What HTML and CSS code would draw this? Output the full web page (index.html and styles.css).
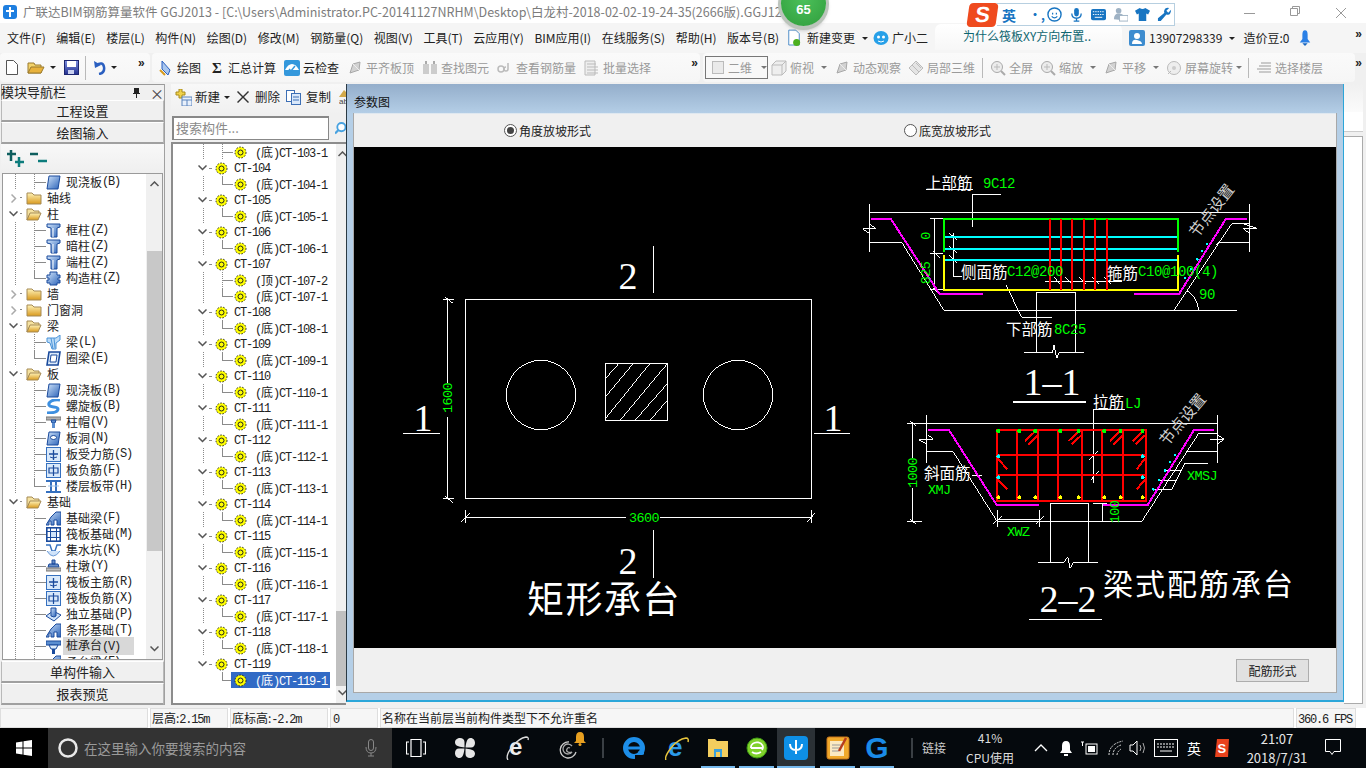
FILE: index.html
```html
<!DOCTYPE html>
<html lang="zh">
<head>
<meta charset="utf-8">
<title>广联达BIM钢筋算量软件 GGJ2013</title>
<link rel="stylesheet" href="styles.css">
</head>
<body>
<svg class="defs" aria-hidden="true">
  <defs>
    <linearGradient id="gFolder" x1="0" y1="0" x2="0" y2="1"><stop offset="0" stop-color="#fff3b8"/><stop offset="1" stop-color="#d99a1e"/></linearGradient>
    <linearGradient id="gBlue" x1="0" y1="0" x2="1" y2="1"><stop offset="0" stop-color="#cfe3fa"/><stop offset="1" stop-color="#2a62b8"/></linearGradient>
    <linearGradient id="gSave" x1="0" y1="0" x2="0" y2="1"><stop offset="0" stop-color="#7d8fe0"/><stop offset="1" stop-color="#23308f"/></linearGradient>
    <symbol id="fc" viewBox="0 0 16 14"><path d="M1 2h5l2 2h7v9H1z" fill="url(#gFolder)" stroke="#a58a55"/></symbol>
    <symbol id="fo" viewBox="0 0 16 14"><path d="M1 2h5l2 2h5v3H4L1 13z" fill="#f5e2a0" stroke="#a58a55"/><path d="M4 6h11l-3 7H1z" fill="url(#gFolder)" stroke="#a58a55"/></symbol>
    <symbol id="col" viewBox="0 0 15 15"><path d="M1 1h13v3l-3 1v9H5V5L1 4z" fill="url(#gBlue)" stroke="#1a4a9c"/><path d="M7 5v9" stroke="#fff"/></symbol>
    <symbol id="gz" viewBox="0 0 15 15"><path d="M4 1h7v3h3v3h-2v2h2v3h-3v2H4v-2H1V9h2V7H1V4h3z" fill="url(#gBlue)" stroke="#1a4a9c"/></symbol>
    <symbol id="slab" viewBox="0 0 15 15"><path d="M3 1h11l-2 13H1z" fill="url(#gBlue)" stroke="#1a4a9c"/></symbol>
    <symbol id="ring" viewBox="0 0 15 15"><path d="M3 1h11l-2 13H1z" fill="#dcebfb" stroke="#1a4a9c" stroke-width="1.6"/><path d="M5 4h6l-1 7H4z" fill="#fff" stroke="#1a4a9c"/></symbol>
    <symbol id="beam" viewBox="0 0 15 15"><path d="M1 3l9 0 4-3v5l-4 3v6H6L4 8 1 7z" fill="#bcdcf7" stroke="#4d94d8"/><path d="M5 3l2 11M8 3l1 10" stroke="#4d94d8"/></symbol>
    <symbol id="spiral" viewBox="0 0 15 15"><path d="M14 1C7 0 2 3 3 6s9 1 9 4-5 4-11 4" fill="none" stroke="#3d8fe0" stroke-width="3"/></symbol>
    <symbol id="cap" viewBox="0 0 15 15"><path d="M0 2h15v3H0z" fill="#b0b0b0" stroke="#777"/><path d="M5 5h5l-1 3H6z" fill="#5b8ed0" stroke="#1a4a9c"/><path d="M6 8h3v5H6z" fill="#5b8ed0"/></symbol>
    <symbol id="hole" viewBox="0 0 15 15"><path d="M3 1h11l-2 13H1z" fill="url(#gBlue)" stroke="#1a4a9c"/><ellipse cx="7.5" cy="6.5" rx="3" ry="2" fill="#fff" stroke="#1a4a9c"/></symbol>
    <symbol id="pl1" viewBox="0 0 15 15"><rect x=".5" y=".5" width="14" height="14" fill="#d9e9fa" stroke="#3570bf"/><path d="M7.5 3v10M3 7h9" stroke="#1a4a9c" stroke-width="1.3"/><path d="M4 10q3 2 7 0" fill="none" stroke="#1a4a9c"/></symbol>
    <symbol id="pl2" viewBox="0 0 15 15"><rect x=".5" y=".5" width="14" height="14" fill="#d9e9fa" stroke="#3570bf"/><path d="M3 5h9v5H3zM7.5 2v11" fill="none" stroke="#1a4a9c" stroke-width="1.2"/></symbol>
    <symbol id="band" viewBox="0 0 15 15"><path d="M0 2h15M0 13h15" stroke="#3570bf" stroke-width="2"/><path d="M5 3v9M10 3v9" stroke="#3570bf" stroke-width="2"/><path d="M2 7h11" stroke="#9cc2ea"/></symbol>
    <symbol id="fb" viewBox="0 0 15 15"><path d="M0 14l5-8 5-5h5v13H11V9H8v5H5v-4H3v4z" fill="url(#gBlue)" stroke="#1a4a9c"/></symbol>
    <symbol id="raft" viewBox="0 0 15 15"><rect x=".8" y=".8" width="13.4" height="13.4" fill="#fff" stroke="#1a4a9c" stroke-width="1.6"/><rect x="4.5" y="4.5" width="6" height="6" fill="#cfe3fa" stroke="#1a4a9c"/><path d="M1 4.5h3M11 4.500h3M1 10.500h3M11 10.500h3M4.500 1v3M10.500 1v3M4.500 11v3M10.500 11v3" stroke="#1a4a9c"/></symbol>
    <symbol id="pit" viewBox="0 0 15 15"><path d="M0 2h4l2 6h3l2-6h4" fill="none" stroke="#3570bf" stroke-width="1.4"/><path d="M1 8q6 10 13 0" fill="#cfe3fa" stroke="#6b9ad6"/></symbol>
    <symbol id="pier" viewBox="0 0 15 15"><path d="M6 1h3v4H6zM3 5h9l1 3H2z" fill="#6a8fc6" stroke="#1a4a9c"/><rect x="0" y="9" width="15" height="3" fill="#bdbdbd" stroke="#777"/></symbol>
    <symbol id="iso" viewBox="0 0 15 15"><path d="M0 9l7-5 8 4-7 6z" fill="#cfe3fa" stroke="#1a4a9c"/><path d="M5 1h5v8l-2 1-3-1z" fill="url(#gBlue)" stroke="#1a4a9c"/></symbol>
    <symbol id="pile" viewBox="0 0 15 15"><path d="M0 2h15v4H0z" fill="#5b8ed0" stroke="#1a4a9c"/><path d="M3 6h9l-2 4H5z" fill="#dcebfb" stroke="#1a4a9c"/><path d="M6 10h3v5H6z" fill="#1a4a9c"/></symbol>
    <symbol id="cmp" viewBox="0 0 13 13"><circle cx="6.500" cy="6.500" r="5.500" fill="#ff0"/><circle cx="6.500" cy="6.500" r="5.500" fill="none" stroke="#222" stroke-dasharray="1.500 1.500"/><circle cx="6.500" cy="6.500" r="2.500" fill="#ff0" stroke="#222"/></symbol>
    <symbol id="chd" viewBox="0 0 9 6"><path d="M.5 .5l4 4 4-4" fill="none" stroke="#555" stroke-width="1.500"/></symbol>
    <symbol id="chr" viewBox="0 0 6 9"><path d="M.5 .5l4 4-4 4" fill="none" stroke="#aaa" stroke-width="1.500"/></symbol>
    <symbol id="gen" viewBox="0 0 16 16"><path d="M3 13l3-9 7-2-1 8z" fill="#d2d2d2" stroke="#a8a8a8"/><path d="M6 4l6 6" stroke="#ededed"/></symbol>
    <symbol id="mag" viewBox="0 0 16 16"><circle cx="7" cy="7" r="5.500" fill="#ececec" stroke="#aaa"/><path d="M11 11l4 4" stroke="#aaa" stroke-width="2"/><path d="M7 4v6M4 7h6" stroke="#bbb"/></symbol>
    <symbol id="edge" viewBox="0 0 24 24"><circle cx="12" cy="12" r="8.500" fill="none" stroke="#1d8ee8" stroke-width="5"/><path d="M5 12h15M22 17l-6 0" stroke="#1d8ee8" stroke-width="3"/><path d="M13 19h10v5H13z" fill="#05090d"/></symbol>
  </defs>
</svg>

<header class="titlebar">
  <svg class="app-ic" viewBox="0 0 14 14"><rect width="14" height="14" rx="3" fill="#1f7fe0"/><path d="M7 2v10M3 6h8" stroke="#fff" stroke-width="2"/></svg>
  <span class="title-text">广联达BIM钢筋算量软件 GGJ2013 - [C:\Users\Administrator.PC-20141127NRHM\Desktop\白龙村-2018-02-02-19-24-35(2666版).GGJ12</span>
  <div class="winctl">
    <svg viewBox="0 0 46 23"><path d="M18 13.500h11" stroke="#999"/></svg>
    <svg viewBox="0 0 46 23"><path d="M20.500 8.500v-2h7v7h-2M18.500 8.500h7v7h-7z" fill="#fff" stroke="#999"/></svg>
    <svg viewBox="0 0 46 23"><path d="M18 8l10 10M28 8L18 18" stroke="#999"/></svg>
  </div>
</header>
<div class="badge"><span>65</span></div>
<div class="ime">
  <span class="ime-s">S</span>
  <div class="ime-bar">
    <b class="ime-en">英</b><span class="ime-dot">•,</span>
    <svg viewBox="0 0 16 16"><circle cx="8" cy="8" r="7" fill="#fff" stroke="#1875c2" stroke-width="1.500"/><path d="M6 6v2M10 6v2M5 10q3 3 6 0" fill="none" stroke="#1875c2" stroke-width="1.300"/></svg>
    <svg viewBox="0 0 16 16"><rect x="5.500" y="1" width="5" height="9" rx="2.500" fill="#1875c2"/><path d="M3 7q0 5 5 5t5-5M8 12v3M5 15h6" fill="none" stroke="#1875c2" stroke-width="1.400"/></svg>
    <svg viewBox="0 0 16 16"><rect x="0" y="2" width="16" height="12" rx="2" fill="#1875c2"/><path d="M2 5h12M2 8h12" stroke="#fff" stroke-dasharray="1.500 1"/><path d="M4 11h8" stroke="#fff"/></svg>
    <svg viewBox="0 0 16 16"><circle cx="6" cy="4" r="3" fill="#9fb2c4"/><path d="M1 13q0-6 5-6t5 3v4z" fill="#9fb2c4"/><rect x="7" y="9" width="9" height="6" fill="#fff" stroke="#9fb2c4"/></svg>
    <svg viewBox="0 0 16 16"><path d="M5 1L0 4l2 4 2-1v8h8V7l2 1 2-4-5-3q-3 2-6 0z" fill="#1875c2"/></svg>
    <svg viewBox="0 0 16 16"><path d="M15 3l-3 3-2-2 3-3q-4-1-5 2t0 3L1 12v3h3l6-7q3 1 4-1t1-4z" fill="#1875c2"/></svg>
  </div>
</div>

<nav class="menubar">
  <span>文件(F)</span><span class="m1">编辑(E)</span><span class="m1">楼层(L)</span><span class="m1">构件(N)</span><span class="m1">绘图(D)</span><span class="m1">修改(M)</span><span class="m1">钢筋量(Q)</span><span class="m1">视图(V)</span><span class="m1">工具(T)</span><span class="m1">云应用(Y)</span><span class="m1">BIM应用(I)</span><span class="m1">在线服务(S)</span><span class="m1">帮助(H)</span><span class="m1">版本号(B)</span>
  <svg class="mi mi-doc" viewBox="0 0 16 20"><path d="M2 1h8l4 4v13H2z" fill="#fff" stroke="#3b82c4"/><circle cx="11" cy="15" r="4" fill="#4caf1e"/></svg>
  <span class="m-new">新建变更</span><i class="caret caret-dk"></i>
  <svg class="mi mi-gx" viewBox="0 0 16 16"><ellipse cx="8" cy="8" rx="7.500" ry="7" fill="#27a0e8"/><circle cx="5.500" cy="7" r="1.500" fill="#fff"/><circle cx="10.500" cy="7" r="1.500" fill="#fff"/><path d="M5 11q3 2 6 0" fill="none" stroke="#fff"/></svg>
  <span class="m-gx">广小二</span>
  <div class="hint">为什么筏板XY方向布置..</div>
  <svg class="mi mi-user" viewBox="0 0 16 16"><rect width="16" height="16" rx="2" fill="#3d8ccf"/><circle cx="8" cy="6" r="3" fill="#fff"/><path d="M3 14q0-5 5-4t5 4z" fill="#fff"/></svg>
  <span class="m-phone">13907298339</span><i class="caret caret-dk"></i>
  <span class="m-bean">造价豆:0</span>
  <svg class="mi mi-bell" viewBox="0 0 16 20"><path d="M8 1q-3 0-3 5v5l-3 4h12l-3-4V6q0-5-3-5z" fill="#2b80e6"/><path d="M5 16h6l-3 3z" fill="#1565c0"/></svg>
  <span class="more more-end">»</span>
</nav>

<div class="toolbar">
  <div class="seg seg1">
    <svg class="ic-file" viewBox="0 0 12 15"><path d="M.5 .5h7l4 4v10H.5z" fill="#fff" stroke="#555"/></svg>
    <svg class="ic-open" viewBox="0 0 18 15"><path d="M1 3h6l1 2h6v8H1z" fill="#f3d36b" stroke="#9a7a2e"/><path d="M4 7h13l-3 6H1z" fill="#e8b23c" stroke="#9a7a2e"/></svg>
    <i class="caret caret-dk"></i>
    <svg class="ic-save" viewBox="0 0 15 15"><rect x=".5" y=".5" width="14" height="14" fill="url(#gSave)" stroke="#1c2570"/><rect x="3" y="1" width="9" height="6" fill="#fff"/><rect x="4" y="10" width="6" height="4" fill="#c9d0ef"/></svg>
    <i class="vsep"></i>
    <svg class="ic-undo" viewBox="0 0 12 15"><path d="M2 5q7-4 8 2t-5 7" fill="none" stroke="#2a5fc0" stroke-width="2.500"/><path d="M0 1l1 7 6-3z" fill="#2a5fc0"/></svg>
    <i class="caret caret-dk"></i>
    <span class="more">»</span>
  </div>
  <div class="seg seg2">
    <div class="tool"><svg class="ti" viewBox="0 0 16 16"><path d="M4 1l8 9-2 5-6-6z" fill="#a9c6ee" stroke="#2a5fc0"/><path d="M2 10l5 5" stroke="#d69a1e" stroke-width="2"/></svg>绘图</div>
    <div class="tool"><span class="ti sigma">Σ</span>汇总计算</div>
    <div class="tool"><svg class="ti" viewBox="0 0 16 16"><rect width="16" height="16" rx="2" fill="#3498dc"/><path d="M1 10q3-6 7-6t7 6z" fill="#fff"/><path d="M5 9l2 2 4-5" fill="none" stroke="#3498dc" stroke-width="1.500"/></svg>云检查</div>
    <div class="tool off"><svg class="ti"><use href="#gen"/></svg>平齐板顶</div>
    <div class="tool off"><svg class="ti" viewBox="0 0 16 16"><rect x="1" y="4" width="6" height="10" fill="#ccc"/><rect x="9" y="4" width="6" height="10" fill="#ccc"/><path d="M3 1h2v3H3zM11 1h2v3h-2z" fill="#aaa"/></svg>查找图元</div>
    <div class="tool off"><svg class="ti" viewBox="0 0 16 16"><circle cx="4" cy="9" r="3" fill="none" stroke="#bbb" stroke-width="1.500"/><path d="M11 3v6a2 2 0 1 1-2-2" fill="none" stroke="#bbb" stroke-width="1.500"/></svg>查看钢筋量</div>
    <div class="tool off"><svg class="ti" viewBox="0 0 16 16"><path d="M1 1h10v14H1z" fill="#eee" stroke="#bbb"/><path d="M3 4h9M3 7h11M3 10h11M3 13h11" stroke="#bbb"/></svg>批量选择</div>
    <span class="more more-r">»</span>
  </div>
  <div class="seg seg3">
    <div class="combo"><i class="sq"></i><span>二维</span><i class="caret"></i></div>
    <div class="tools3">
      <div class="tool off"><svg class="ti" viewBox="0 0 16 16"><path d="M1 5l4-4h10v10l-4 4H1z" fill="#eee" stroke="#bbb"/><path d="M1 5h10v10M11 5l4-4" fill="none" stroke="#bbb"/></svg>俯视<i class="caret"></i></div>
      <div class="tool off"><svg class="ti"><use href="#gen"/></svg>动态观察</div>
      <div class="tool off"><svg class="ti" viewBox="0 0 16 16"><path d="M1 8l7-7 7 7-7 7z" fill="#e4e4e4" stroke="#bbb"/><path d="M4 5l7 7M8 3l5 5" stroke="#bbb"/></svg>局部三维</div>
      <i class="vsep"></i>
      <div class="tool off"><svg class="ti"><use href="#mag"/></svg>全屏</div>
      <div class="tool off"><svg class="ti"><use href="#mag"/></svg>缩放<i class="caret"></i></div>
      <div class="tool off"><svg class="ti"><use href="#gen"/></svg>平移<i class="caret"></i></div>
      <div class="tool off rot"><svg class="ti" viewBox="0 0 16 16"><circle cx="8" cy="8" r="6.500" fill="#eee" stroke="#bbb"/><circle cx="8" cy="8" r="2" fill="#ccc"/><path d="M2 14l3-3" stroke="#bbb"/></svg>屏幕旋转<i class="caret"></i></div>
      <i class="vsep vs2"></i>
      <div class="tool off"><svg class="ti" viewBox="0 0 16 16"><path d="M5 3h10M3 6h12M1 9h14M3 12h12" stroke="#bbb" stroke-width="1.500"/></svg>选择楼层</div>
    </div>
  </div>
  <span class="more more-end">»</span>
</div>

<main class="workspace">
  <aside class="nav">
    <div class="nav-head"><span class="nav-title">模块导航栏</span>
      <svg class="pin" viewBox="0 0 9 10"><path d="M2 0h5v5h1v1H5v4H4V6H1V5h1z" fill="#222"/></svg><span class="x">×</span></div>
    <div class="nav-btn">工程设置</div>
    <div class="nav-btn">绘图输入</div>
    <div class="nav-tools">
      <svg viewBox="0 0 17 17"><path d="M4 0v11M0 4h9" stroke="#0f5f5f" stroke-width="2.500"/><path d="M12 7v10M8 12h9" stroke="#0c7c7c" stroke-width="2.500"/></svg>
      <svg viewBox="0 0 17 17"><path d="M0 4h8" stroke="#0f5f5f" stroke-width="2.500"/><path d="M8 11h9" stroke="#0c7c7c" stroke-width="2.500"/></svg>
    </div>
    <div class="nav-treebox">
      <div class="nav-tree">
        <div class="nl lv"><svg class="ic15"><use href="#slab"/></svg>现浇板<tt>(B)</tt></div>
        <div class="ng"><svg class="chv"><use href="#chr"/></svg><svg class="fd"><use href="#fc"/></svg>轴线</div>
        <div class="ng"><svg class="chv2"><use href="#chd"/></svg><svg class="fd"><use href="#fo"/></svg>柱</div>
        <div class="nl"><svg class="ic15"><use href="#col"/></svg>框柱<tt>(Z)</tt></div>
        <div class="nl"><svg class="ic15"><use href="#col"/></svg>暗柱<tt>(Z)</tt></div>
        <div class="nl"><svg class="ic15"><use href="#col"/></svg>端柱<tt>(Z)</tt></div>
        <div class="nl lst"><svg class="ic15"><use href="#gz"/></svg>构造柱<tt>(Z)</tt></div>
        <div class="ng"><svg class="chv"><use href="#chr"/></svg><svg class="fd"><use href="#fc"/></svg>墙</div>
        <div class="ng"><svg class="chv"><use href="#chr"/></svg><svg class="fd"><use href="#fc"/></svg>门窗洞</div>
        <div class="ng"><svg class="chv2"><use href="#chd"/></svg><svg class="fd"><use href="#fo"/></svg>梁</div>
        <div class="nl"><svg class="ic15"><use href="#beam"/></svg>梁<tt>(L)</tt></div>
        <div class="nl lst"><svg class="ic15"><use href="#ring"/></svg>圈梁<tt>(E)</tt></div>
        <div class="ng"><svg class="chv2"><use href="#chd"/></svg><svg class="fd"><use href="#fo"/></svg>板</div>
        <div class="nl"><svg class="ic15"><use href="#slab"/></svg>现浇板<tt>(B)</tt></div>
        <div class="nl"><svg class="ic15"><use href="#spiral"/></svg>螺旋板<tt>(B)</tt></div>
        <div class="nl"><svg class="ic15"><use href="#cap"/></svg>柱帽<tt>(V)</tt></div>
        <div class="nl"><svg class="ic15"><use href="#hole"/></svg>板洞<tt>(N)</tt></div>
        <div class="nl"><svg class="ic15"><use href="#pl1"/></svg>板受力筋<tt>(S)</tt></div>
        <div class="nl"><svg class="ic15"><use href="#pl2"/></svg>板负筋<tt>(F)</tt></div>
        <div class="nl lst"><svg class="ic15"><use href="#band"/></svg>楼层板带<tt>(H)</tt></div>
        <div class="ng"><svg class="chv2"><use href="#chd"/></svg><svg class="fd"><use href="#fo"/></svg>基础</div>
        <div class="nl"><svg class="ic15"><use href="#fb"/></svg>基础梁<tt>(F)</tt></div>
        <div class="nl"><svg class="ic15"><use href="#raft"/></svg>筏板基础<tt>(M)</tt></div>
        <div class="nl"><svg class="ic15"><use href="#pit"/></svg>集水坑<tt>(K)</tt></div>
        <div class="nl"><svg class="ic15"><use href="#pier"/></svg>柱墩<tt>(Y)</tt></div>
        <div class="nl"><svg class="ic15"><use href="#pl1"/></svg>筏板主筋<tt>(R)</tt></div>
        <div class="nl"><svg class="ic15"><use href="#pl2"/></svg>筏板负筋<tt>(X)</tt></div>
        <div class="nl"><svg class="ic15"><use href="#iso"/></svg>独立基础<tt>(P)</tt></div>
        <div class="nl"><svg class="ic15"><use href="#fb"/></svg>条形基础<tt>(T)</tt></div>
        <div class="nl cur"><svg class="ic15"><use href="#pile"/></svg><span>桩承台<tt>(V)</tt></span></div>
        <div class="nl"><svg class="ic15"><use href="#fb"/></svg>承台梁<tt>(F)</tt></div>
      </div>
      <div class="vscroll navscroll"><svg class="arr" viewBox="0 0 9 6"><path d="M.5 5l4-4 4 4" fill="none" stroke="#555" stroke-width="1.500"/></svg><div class="thumb"></div><svg class="arr arr-b" viewBox="0 0 9 6"><use href="#chd"/></svg></div>
    </div>
    <div class="nav-btn nb1">单构件输入</div>
    <div class="nav-btn">报表预览</div>
  </aside>

  <section class="comp">
    <div class="comp-tools">
      <svg class="ct-ic" viewBox="0 0 17 17"><path d="M4 0h3v3h3v3H7v3H4V6H1V3h3z" fill="#f0d24a" stroke="#a98b1c"/><rect x="7" y="8" width="10" height="9" fill="#e8f0fb" stroke="#5b83bc"/><path d="M7 11h10M12 11v6" stroke="#5b83bc"/></svg>
      <span class="ct-new">新建</span><i class="caret caret-dk"></i>
      <svg class="ct-x" viewBox="0 0 12 12"><path d="M1 0l5 5 5-5 1 1-5 5 5 5-1 1-5-5-5 5-1-1 5-5-5-5z" fill="#333"/></svg>
      <span class="ct-del">删除</span>
      <svg class="ct-cp" viewBox="0 0 15 15"><rect x=".5" y=".5" width="8" height="11" fill="#fff" stroke="#3d6fb5"/><rect x="5.500" y="3.500" width="9" height="11" fill="#d9e8fa" stroke="#3d6fb5"/><path d="M7 7h6M7 10h6" stroke="#3d6fb5"/></svg>
      <span class="ct-copy">复制</span>
      <svg class="ct-ab" viewBox="0 0 12 15"><path d="M5 0l7 7H0z" fill="#d2a94a"/><text x="0" y="14" class="ab">ab</text></svg>
    </div>
    <div class="search"><div class="search-box">搜索构件...</div>
      <svg class="search-ic" viewBox="0 0 12 14"><circle cx="7" cy="6" r="4.500" fill="#fff" stroke="#48a2e0" stroke-width="2"/><path d="M3.500 9.500L0 13" stroke="#48a2e0" stroke-width="2.500"/></svg></div>
    <div class="comp-treebox">
      <div class="comp-tree">
        <div class="cl"><svg class="ic13"><use href="#cmp"/></svg><span><tt>(</tt>底<tt>)CT-103-1</tt></span></div>
        <div class="cg"><svg class="chv2"><use href="#chd"/></svg><svg class="ic13"><use href="#cmp"/></svg><tt>CT-104</tt></div>
        <div class="cl lst"><svg class="ic13"><use href="#cmp"/></svg><span><tt>(</tt>底<tt>)CT-104-1</tt></span></div>
        <div class="cg"><svg class="chv2"><use href="#chd"/></svg><svg class="ic13"><use href="#cmp"/></svg><tt>CT-105</tt></div>
        <div class="cl lst"><svg class="ic13"><use href="#cmp"/></svg><span><tt>(</tt>底<tt>)CT-105-1</tt></span></div>
        <div class="cg"><svg class="chv2"><use href="#chd"/></svg><svg class="ic13"><use href="#cmp"/></svg><tt>CT-106</tt></div>
        <div class="cl lst"><svg class="ic13"><use href="#cmp"/></svg><span><tt>(</tt>底<tt>)CT-106-1</tt></span></div>
        <div class="cg"><svg class="chv2"><use href="#chd"/></svg><svg class="ic13"><use href="#cmp"/></svg><tt>CT-107</tt></div>
        <div class="cl"><svg class="ic13"><use href="#cmp"/></svg><span><tt>(</tt>顶<tt>)CT-107-2</tt></span></div>
        <div class="cl lst"><svg class="ic13"><use href="#cmp"/></svg><span><tt>(</tt>底<tt>)CT-107-1</tt></span></div>
        <div class="cg"><svg class="chv2"><use href="#chd"/></svg><svg class="ic13"><use href="#cmp"/></svg><tt>CT-108</tt></div>
        <div class="cl lst"><svg class="ic13"><use href="#cmp"/></svg><span><tt>(</tt>底<tt>)CT-108-1</tt></span></div>
        <div class="cg"><svg class="chv2"><use href="#chd"/></svg><svg class="ic13"><use href="#cmp"/></svg><tt>CT-109</tt></div>
        <div class="cl lst"><svg class="ic13"><use href="#cmp"/></svg><span><tt>(</tt>底<tt>)CT-109-1</tt></span></div>
        <div class="cg"><svg class="chv2"><use href="#chd"/></svg><svg class="ic13"><use href="#cmp"/></svg><tt>CT-110</tt></div>
        <div class="cl lst"><svg class="ic13"><use href="#cmp"/></svg><span><tt>(</tt>底<tt>)CT-110-1</tt></span></div>
        <div class="cg"><svg class="chv2"><use href="#chd"/></svg><svg class="ic13"><use href="#cmp"/></svg><tt>CT-111</tt></div>
        <div class="cl lst"><svg class="ic13"><use href="#cmp"/></svg><span><tt>(</tt>底<tt>)CT-111-1</tt></span></div>
        <div class="cg"><svg class="chv2"><use href="#chd"/></svg><svg class="ic13"><use href="#cmp"/></svg><tt>CT-112</tt></div>
        <div class="cl lst"><svg class="ic13"><use href="#cmp"/></svg><span><tt>(</tt>底<tt>)CT-112-1</tt></span></div>
        <div class="cg"><svg class="chv2"><use href="#chd"/></svg><svg class="ic13"><use href="#cmp"/></svg><tt>CT-113</tt></div>
        <div class="cl lst"><svg class="ic13"><use href="#cmp"/></svg><span><tt>(</tt>底<tt>)CT-113-1</tt></span></div>
        <div class="cg"><svg class="chv2"><use href="#chd"/></svg><svg class="ic13"><use href="#cmp"/></svg><tt>CT-114</tt></div>
        <div class="cl lst"><svg class="ic13"><use href="#cmp"/></svg><span><tt>(</tt>底<tt>)CT-114-1</tt></span></div>
        <div class="cg"><svg class="chv2"><use href="#chd"/></svg><svg class="ic13"><use href="#cmp"/></svg><tt>CT-115</tt></div>
        <div class="cl lst"><svg class="ic13"><use href="#cmp"/></svg><span><tt>(</tt>底<tt>)CT-115-1</tt></span></div>
        <div class="cg"><svg class="chv2"><use href="#chd"/></svg><svg class="ic13"><use href="#cmp"/></svg><tt>CT-116</tt></div>
        <div class="cl lst"><svg class="ic13"><use href="#cmp"/></svg><span><tt>(</tt>底<tt>)CT-116-1</tt></span></div>
        <div class="cg"><svg class="chv2"><use href="#chd"/></svg><svg class="ic13"><use href="#cmp"/></svg><tt>CT-117</tt></div>
        <div class="cl lst"><svg class="ic13"><use href="#cmp"/></svg><span><tt>(</tt>底<tt>)CT-117-1</tt></span></div>
        <div class="cg"><svg class="chv2"><use href="#chd"/></svg><svg class="ic13"><use href="#cmp"/></svg><tt>CT-118</tt></div>
        <div class="cl lst"><svg class="ic13"><use href="#cmp"/></svg><span><tt>(</tt>底<tt>)CT-118-1</tt></span></div>
        <div class="cg"><svg class="chv2"><use href="#chd"/></svg><svg class="ic13"><use href="#cmp"/></svg><tt>CT-119</tt></div>
        <div class="cl end"><div class="sel"><svg class="ic13"><use href="#cmp"/></svg><span><tt>(</tt>底<tt>)CT-119-1</tt></span></div></div>
      </div>
      <div class="vscroll compscroll"><svg class="arr" viewBox="0 0 9 6"><path d="M.5 5l4-4 4 4" fill="none" stroke="#555" stroke-width="1.500"/></svg><div class="thumb"></div><svg class="arr arr-b" viewBox="0 0 9 6"><use href="#chd"/></svg></div>
    </div>
  </section>

  <section class="dialog">
    <div class="dlg-title">参数图</div>
    <div class="dlg-body">
      <div class="radios">
        <label class="radio"><i class="dot on"></i>角度放坡形式</label>
        <label class="radio"><i class="dot"></i>底宽放坡形式</label>
      </div>
      <svg class="cad" viewBox="354 147 982 501" width="982" height="501">
        <!-- plan view -->
        <g transform="translate(400 240) scale(.33333)" class="ln">
          <rect x="196" y="178" width="1039" height="597"/>
          <circle cx="423" cy="465" r="104"/><circle cx="1014" cy="465" r="104"/>
          <rect x="616" y="370" width="187" height="171"/>
          <path d="M617 415L657 370M617 470L700 370M617 535L750 370M660 541L803 370M705 541L803 430M750 541L803 480"/>
          <path d="M143 175V430M143 530V775M128 178H163M128 775H163M135 172L160 190M135 768L160 790"/>
          <path d="M196 832H678M780 832H1235M196 810V848M1235 810V848M185 845L208 820M1222 845L1245 820"/>
          <path d="M760 18V160M760 870V1013M10 582H120M1242 582H1350"/>
        </g>
        <text class="num" x="628" y="289">2</text>
        <text class="num" x="628" y="574">2</text>
        <text class="num" x="423" y="431">1</text>
        <text class="num" x="833" y="431">1</text>
        <text class="g" x="644" y="522" text-anchor="middle">3600</text>
        <text class="g" text-anchor="middle" transform="translate(452 398) rotate(-90)">1600</text>
        <text class="cn big" x="527" y="613">矩形承台</text>

        <!-- section 1-1 -->
        <g transform="translate(860 165) scale(.33333)" class="ln">
          <path d="M28 142H1168M28 118V262M1168 118V262M30 178L47 190L8 192L28 205M1150 176L1190 190L1148 190L1168 205"/>
          <path d="M28 232H125L252 436H1130M942 436L1115 176H1168M1080 232H1168M1078 232L1068 240"/>
          <path d="M225 161V375M210 161H250M210 267H250M210 375H250M218 258L240 280M218 368L240 390"/>
          <path d="M280 205V335H305M268 205L292 225M268 245L292 265M268 272L292 295"/>
          <path d="M422 88H337V185M438 360L485 457H575"/>
          <path d="M555 350H785M580 335L602 358M615 335L638 358M655 335L678 358M695 335L718 358M732 335L755 358"/>
          <path d="M530 562V382H647V562M492 562H578L582 540L590 580L598 562H672"/>
          <path d="M1016 436A75 75 0 0 0 982 378M198 75H340M458 712H678"/>
          <path class="pk" d="M33 161H92L238 386H368M822 386H958L1098 161H1160"/>
          <path class="cy" d="M252 215H955M252 252H955M252 285H955"/>
          <path class="gn" d="M252 262V161H955V262"/>
          <path class="ye" d="M252 270V375H955V270"/>
          <path class="rd" d="M570 161V375M603 161V375M636 161V375M672 161V375M705 161V375M741 161V375"/>
          <g class="cyd"><circle cx="1042" cy="237" r="4"/><circle cx="1027" cy="258" r="4"/><circle cx="1012" cy="283" r="4"/><circle cx="993" cy="313" r="4"/><circle cx="975" cy="340" r="4"/></g>
        </g>
        <text class="cn" x="926" y="189">上部筋</text>
        <text class="g2" x="983" y="188">9C12</text>
        <text class="g" text-anchor="middle" transform="translate(930 236) rotate(-90)">0</text>
        <text class="g" text-anchor="middle" transform="translate(930 273) rotate(-90)">825</text>
        <text class="cn" x="961" y="278">侧面筋</text>
        <text class="g2" x="1007" y="276">C12@200</text>
        <text class="cn" x="1107" y="279">箍筋</text>
        <text class="g2" x="1138" y="276">C10@100(4)</text>
        <text class="g2" x="1199" y="299">90</text>
        <text class="cn" x="1006" y="335">下部筋</text>
        <text class="g2" x="1054" y="334">8C25</text>
        <text class="num" x="1052" y="395">1–1</text>
        <text class="cn gy" text-anchor="middle" transform="translate(1216 214) rotate(-52)">节点设置</text>

        <!-- section 2-2 -->
        <g transform="translate(880 380) scale(.33333)" class="ln">
          <path d="M100 130H1012M140 105V250M1012 105V250M145 165L160 178L118 180L140 192M990 178H1033L1012 165M1033 178L1012 192"/>
          <path d="M140 216H220L352 425H785L955 162H1012M918 216H1012"/>
          <path d="M98 130V235M98 325V425M82 130H125M82 425H125M90 122L108 138M90 418L108 432"/>
          <path d="M640 220V88H735M640 220V310M628 240L655 212M632 300L658 272"/>
          <path d="M275 288H305M820 330H875L913 252H985M835 302H890M855 272H905"/>
          <path d="M353 420H480M353 390V440M480 390V440M340 432L365 408M468 432L492 408"/>
          <path d="M511 547V370H626V547M475 547H553L563 530L570 565L580 547H655"/>
          <path d="M640 370H680M668 370V425M665 425H690M447 720H665M400 66H618"/>
          <path class="pk" d="M143 150H207L350 375H478M668 375H803L942 150H1002"/>
          <path class="rd" d="M350 150H798V362H350ZM410 150V362M473 150V362M535 150V362M605 150V362M665 150V362M730 150V362M350 225H798M350 285H798"/>
          <path class="rd" d="M435 183L470 150M445 193L475 165M565 183L600 152M575 193L605 165M690 183L722 152M700 193L728 165M758 183L790 152M768 193L795 165M350 232L382 268M350 295L382 328M798 232L770 268M798 295L770 328"/>
          <g class="gnd"><circle cx="355" cy="153" r="6"/><circle cx="418" cy="153" r="6"/><circle cx="466" cy="153" r="6"/><circle cx="541" cy="153" r="6"/><circle cx="596" cy="153" r="6"/><circle cx="673" cy="153" r="6"/><circle cx="722" cy="153" r="6"/><circle cx="788" cy="153" r="6"/></g>
          <g class="yed"><circle cx="355" cy="352" r="6"/><circle cx="418" cy="352" r="6"/><circle cx="466" cy="352" r="6"/><circle cx="541" cy="352" r="6"/><circle cx="596" cy="352" r="6"/><circle cx="673" cy="352" r="6"/><circle cx="722" cy="352" r="6"/><circle cx="788" cy="352" r="6"/></g>
          <g class="cyd"><circle cx="355" cy="229" r="6"/><circle cx="788" cy="229" r="6"/><circle cx="355" cy="292" r="6"/><circle cx="788" cy="292" r="6"/><circle cx="820" cy="328" r="4"/><circle cx="838" cy="300" r="4"/><circle cx="855" cy="272" r="4"/><circle cx="870" cy="247" r="4"/><circle cx="886" cy="225" r="4"/></g>
        </g>
        <text class="cn" x="1093" y="408">拉筋</text>
        <text class="g2" x="1125" y="408">LJ</text>
        <text class="cn" x="924" y="479">斜面筋</text>
        <text class="g" x="928" y="494">XMJ</text>
        <text class="g" x="1187" y="480">XMSJ</text>
        <text class="g" x="1007" y="536">XWZ</text>
        <text class="g" text-anchor="middle" transform="translate(917 473) rotate(-90)">1000</text>
        <text class="g" text-anchor="middle" transform="translate(1119 512) rotate(-90)">100</text>
        <text class="num" x="1068" y="612">2–2</text>
        <text class="cn big2" x="1103" y="595">梁式配筋承台</text>
        <text class="cn gy" text-anchor="middle" transform="translate(1187 423) rotate(-50)">节点设置</text>
      </svg>
      <div class="dlg-foot"><button class="btn">配筋形式</button></div>
    </div>
  </section>
  <div class="rstrip"><div class="rs-head"></div><div class="rs-white"></div><div class="rs-box"></div></div>
</main>

<footer class="status">
  <div class="st s0"></div>
  <div class="st s1">层高:<tt>2.15m</tt></div>
  <div class="st s2">底标高:<tt>-2.2m</tt></div>
  <div class="st s3"><tt>0</tt></div>
  <div class="st s4">名称在当前层当前构件类型下不允许重名</div>
  <div class="st s5"><tt>360.6 FPS</tt></div>
</footer>

<div class="taskbar">
  <div class="start"><svg viewBox="0 0 16 16"><path d="M0 2.500l6.500-1v6H0zM7.500 1.300L16 0v7.500H7.500zM0 8.500h6.500v6L0 13.500zM7.500 8.500H16V16l-8.500-1.300z" fill="#fff"/></svg></div>
  <div class="tsearch">
    <svg class="cortana" viewBox="0 0 20 20"><circle cx="10" cy="10" r="8.500" fill="none" stroke="#e8e8e8" stroke-width="2.500"/></svg>
    <span>在这里输入你要搜索的内容</span>
    <svg class="tmic" viewBox="0 0 12 18"><rect x="3.500" y=".5" width="5" height="11" rx="2.500" fill="none" stroke="#888"/><path d="M1 8q0 6 5 6t5-6M6 14v3M3 17h6" fill="none" stroke="#888"/></svg>
  </div>
  <div class="slot w48"><svg class="sv20" viewBox="0 0 20 18"><path d="M5 .5h10v17H5zM3 3H.5v12H3M17 3h2.500v12H17" fill="none" stroke="#fff" stroke-width="1.200"/></svg></div>
  <div class="slot w50"><svg class="sv22" viewBox="0 0 22 22"><g fill="#e6e6e6"><path d="M10.500 10.500C7 10 1 9.500 1 5.500 1 2.500 3.500 1 6 1s4.500 1.500 4.500 4z"/><path d="M11.500 10.500C12 7 12.500 1 16.500 1 19.500 1 21 3.500 21 6s-1.500 4.500-4 4.500z"/><path d="M11.500 11.500C15 12 21 12.500 21 16.500c0 3-2.500 4.500-5 4.500s-4.500-1.500-4.500-4z"/><path d="M10.500 11.500C10 15 9.500 21 5.500 21 2.500 21 1 18.500 1 16s1.500-4.500 4-4.500z"/></g></svg></div>
  <div class="slot w52"><svg class="sv24" viewBox="0 0 24 24"><text x="4" y="19" class="ie-w">e</text><path d="M3 24q-3-4 4-13T21 1q3 0 2 3" fill="none" stroke="#ddd" stroke-width="1.300"/></svg></div>
  <div class="slot w48 spiral"><svg class="sv22" viewBox="0 0 22 22"><path d="M12 5a8 8 0 1 0 7 10" fill="none" stroke="#ccc" stroke-width="1.300"/><path d="M15 9a5 5 0 1 0 0 6q-2 1-4 0t-1-3 3-1" fill="none" stroke="#aaa" stroke-width="1.300"/></svg><svg class="tkbell" viewBox="0 0 12 14"><path d="M6 0Q2 0 2 5v4L0 11h12l-2-2V5q0-5-4-5z" fill="#e8a020"/><circle cx="6" cy="12.500" r="1.500" fill="#e8a020"/></svg></div>
  <i class="tsep"></i>
  <div class="slot w40 sl-e"><svg class="sv24" viewBox="0 0 24 24"><use href="#edge"/></svg></div>
  <div class="slot w43"><svg class="sv24" viewBox="0 0 24 24"><text x="3" y="20" class="ie-b">e</text><path d="M1 24q-2-3 5-12T21 2q3 0 2 4" fill="none" stroke="#e8c53c" stroke-width="1.500"/></svg></div>
  <div class="slot w40 open"><svg class="sv22" viewBox="0 0 22 20"><path d="M1 1h7l2 2h11v16H1z" fill="#f3cd5e"/><rect x="7" y="11" width="8" height="8" fill="#3aa0dc"/><rect x="9" y="14" width="4" height="5" fill="#f3cd5e"/></svg></div>
  <div class="slot w41 open"><svg class="sv24" viewBox="0 0 24 24"><circle cx="12" cy="12" r="10" fill="#7fd12b" stroke="#3e9c14"/><path d="M6 12a6 5 0 1 1 11 2M6 12h11M7 16q4 3 9 0" fill="none" stroke="#fff" stroke-width="1.800"/></svg></div>
  <div class="slot w38 open active"><svg class="sv24" viewBox="0 0 24 24"><rect width="24" height="24" rx="4" fill="#0e8fe6"/><path d="M12 4v14M6 8q0 6 6 6t6-6" fill="none" stroke="#fff" stroke-width="2"/></svg></div>
  <div class="slot w41 open"><svg class="sv24" viewBox="0 0 24 24"><rect x="1" y="1" width="22" height="22" rx="2" fill="#f0a92c" stroke="#c9761a"/><rect x="4" y="5" width="14" height="15" fill="#fbe9c2"/><path d="M6 9h9M6 12h9M6 15h7" stroke="#999"/><path d="M13 15l7-13" stroke="#b73c1d" stroke-width="2.500"/></svg></div>
  <div class="slot w40 open gapp"><span class="tk-g">G</span></div>
  <i class="tsep ts2"></i>
  <span class="tk-link">链接</span>
  <div class="tk-cpu"><span>41%</span><span>CPU使用</span></div>
  <div class="tray">
    <svg viewBox="0 0 14 8" class="t14"><path d="M1 7l6-6 6 6" fill="none" stroke="#fff" stroke-width="1.300"/></svg>
    <svg viewBox="0 0 14 16" class="t14b"><path d="M7 1Q3 1 3 6v4l-2 3h12l-2-3V6q0-5-4-5z" fill="#fff"/><rect x="5" y="14" width="4" height="2" fill="#fff"/></svg>
    <svg viewBox="0 0 18 14" class="t18 batt"><rect x="6" y="3" width="11" height="10" fill="none" stroke="#fff"/><rect x="8" y="5" width="7" height="6" fill="#fff"/><path d="M1 1h3M2.500 1v4" stroke="#fff"/></svg>
    <svg viewBox="0 0 18 16" class="t18 wifi"><path d="M1 15Q1 4 15 1M5 15q0-7 8-10M9 15q0-3 4-6" fill="none" stroke="#ddd" stroke-dasharray="2 1"/></svg>
    <svg viewBox="0 0 18 16" class="t18"><path d="M1 5h3l4-4v14l-4-4H1z" fill="none" stroke="#fff"/><path d="M11 5q2 3 0 6M14 3q3 5 0 10" fill="none" stroke="#aaa"/></svg>
    <svg viewBox="0 0 24 18" class="t24"><rect x=".5" y=".5" width="23" height="17" fill="none" stroke="#fff"/><path d="M3 5h18M3 8h18" stroke="#fff" stroke-dasharray="2 1"/><path d="M6 12h12" stroke="#fff"/></svg>
    <span class="t-en">英</span>
    <svg viewBox="0 0 16 18" class="t16"><path d="M3 0h12l-1 18H1z" fill="#e8421c"/><text x="3.500" y="14" class="sog">S</text></svg>
  </div>
  <div class="clock"><span>21:07</span><span>2018/7/31</span></div>
  <div class="notif"><svg viewBox="0 0 16 18"><path d="M.5 .5h15v12H9l-2 3-2-3H.5z" fill="none" stroke="#fff"/></svg></div>
</div>
</body>
</html>
```
FILE: styles.css
```css
* { box-sizing: border-box; }
:root { --dv: linear-gradient(#8a8a8a 50%, transparent 50%); --dh: linear-gradient(90deg, #8a8a8a 50%, transparent 50%); }
html, body { margin: 0; height: 768px; overflow: hidden; }
body { display: flex; flex-direction: column; width: 1366px; position: relative; background: #f0f0f0; color: #222; font: 12px/16px "Noto Sans CJK SC", "Liberation Sans", sans-serif; }
.defs { width: 0; height: 0; flex: none; display: block; }
tt { font-family: "Liberation Mono", monospace; font-size: 12px; letter-spacing: -1.2px; }

/* title */
.titlebar { height: 23px; flex: none; background: #fff; display: flex; align-items: center; padding-left: 3px; color: #7c7c7c; font-size: 12.500px; overflow: hidden; }
.app-ic { width: 14px; height: 14px; flex: none; margin-right: 6px; }
.title-text { white-space: nowrap; width: 790px; flex: none; overflow: hidden; }
.winctl { margin-left: auto; display: flex; margin-right: 2px; }
.winctl svg { width: 46px; height: 23px; display: block; }
.badge { position: absolute; left: 781px; top: -19px; width: 45px; height: 45px; border-radius: 50%; background: radial-gradient(circle at 50% 40%, #4cc05a, #2f9d3c); box-shadow: 0 1px 0 3px #bcc4bc, 0 3px 5px rgba(0,0,0,.4); color: #fff; font: bold 13px/1 "Liberation Sans", sans-serif; display: flex; justify-content: center; align-items: flex-end; padding-bottom: 10px; z-index: 3; }
.ime { position: absolute; left: 968px; top: 3px; display: flex; height: 25px; z-index: 3; }
.ime-s { width: 29px; height: 24px; background: #ef4a1e; color: #fff; font: bold 22px/24px "Liberation Sans", sans-serif; text-align: center; border-radius: 4px; transform: skewX(-8deg); }
.ime-bar { width: 178px; height: 23px; background: #fff; border: 1px solid #b7cfe0; border-left: 0; display: flex; align-items: center; padding-left: 5px; gap: 7px; }
.ime-bar svg { width: 15px; height: 15px; flex: none; }
.ime-en { color: #1875c2; font-size: 14px; width: 15px; }
.ime-dot { color: #1875c2; font-weight: bold; width: 16px; padding-left: 5px; }

/* menu */
.menubar { height: 30px; flex: none; background: #f5f5f5; display: flex; align-items: center; padding-left: 7px; color: #222; white-space: nowrap; }
.m1 { margin-left: 10.600px; }
.mi { flex: none; }
.mi-doc { width: 14px; height: 18px; margin-left: 8px; }
.m-new { margin-left: 6px; }
.mi-gx { width: 16px; height: 16px; margin-left: 5px; }
.m-gx { margin-left: 3px; }
.hint { width: 187px; height: 26px; margin-left: 7px; align-self: flex-end; background: linear-gradient(#fff, #f7f7f7); border-radius: 6px 6px 0 0; color: #0e6670; padding: 4px 0 0 28px; margin-bottom: 3px; }
.mi-user { width: 16px; height: 18px; margin-left: 7px; }
.m-phone { margin-left: 4px; }
.m-bean { margin-left: 8px; }
.mi-bell { width: 14px; height: 18px; margin-left: 9px; }
.more { font: bold 12px/1 "Liberation Sans", sans-serif; color: #222; align-self: flex-start; margin-top: 4px; }
.more-end { margin-left: auto; margin-right: 4px; }
.menubar .more { margin-top: 5px; }
.caret { display: inline-block; width: 0; height: 0; border: 3px solid transparent; border-top: 3px solid #777; border-bottom: 0; flex: none; margin-left: 7px; }
.caret-dk { border-top-color: #222; }

/* toolbar */
.toolbar { height: 30px; flex: none; background: #f0f0f0; display: flex; align-items: stretch; }
.seg { background: linear-gradient(#fafafa, #f6f6f6); border-radius: 4px; display: flex; align-items: center; white-space: nowrap; height: 29px; }
.seg1 { width: 150px; padding-left: 6px; margin-right: 2px; }
.ic-file { width: 12px; height: 15px; }
.ic-open { width: 18px; height: 15px; margin-left: 9px; }
.seg1 .caret { margin-left: 5px; }
.ic-save { width: 15px; height: 15px; margin-left: 8px; }
.vsep { width: 1px; height: 24px; background: #b9b9b9; flex: none; }
.seg1 .vsep { margin: 0 8px 0 6px; }
.ic-undo { width: 12px; height: 15px; }
.seg1 .more { margin-left: 21px; }
.seg2 { width: 548px; padding-left: 6px; gap: 8px; margin-right: 3px; }
.more-r { margin-left: auto; margin-right: 2px; }
.tool { display: flex; align-items: center; gap: 3px; }
.tool .caret { margin-left: 4px; }
.rot .caret { margin-left: 0; }
.ti { width: 16px; height: 16px; flex: none; }
.sigma { font: bold 15px/16px "Liberation Serif", serif; text-align: center; }
.off { color: #9a9a9a; }
.seg3 { flex: 1; }
.combo { width: 63px; height: 23px; border: 1px solid #777; margin-left: 2px; display: flex; align-items: center; color: #9a9a9a; padding-left: 6px; flex: none; background: #f8f8f8; }
.combo .sq { width: 14px; height: 13px; background: #eaeaea; border: 1px solid #bbb; margin-right: 4px; }
.combo .caret { margin-left: 9px; }
.tools3 { display: flex; align-items: center; gap: 7px; margin-left: 3px; }
.tools3 .vsep { height: 20px; }
.tools3 .vs2 { margin: 0 0 0 -1px; }

/* workspace */
.workspace { height: 625px; flex: none; display: flex; padding-top: 1px; overflow: hidden; }
.nav { width: 165px; flex: none; margin-right: 6px; display: flex; flex-direction: column; padding-left: 1px; border-right: 1px solid #a0a0a0; height: 621px; }
.nav-head { height: 16px; flex: none; display: flex; align-items: center; border: 1px solid #9a9a9a; border-width: 1px 0 0 1px; }
.nav-title { font-size: 13px; line-height: 13px; flex: 1; margin: -2px 0 0 -1px; }
.pin { width: 9px; height: 10px; margin-right: 9px; }
.x { width: 12px; font-size: 14px; color: #444; margin-right: 2px; }
.nav-btn { height: 22px; flex: none; background: #f0f0f0; border: 1px solid #b9b9b9; border-bottom: 2px solid #a0a0a0; border-top-color: #fff; text-align: center; font-size: 13px; line-height: 20px; }
.nb1 { margin-top: 1px; }
.nav-tools { height: 29px; flex: none; background: linear-gradient(#f8f8f8, #efefef); display: flex; align-items: center; gap: 6px; padding-left: 6px; }
.nav-tools svg { width: 17px; height: 17px; }
.nav-treebox { height: 487px; flex: none; margin: 0 1px; border: 1px solid #9a9a9a; background: #fff; display: flex; overflow: hidden; }
.nav-tree { width: 143px; flex: none; }
.nl, .ng, .cl, .cg { height: 16px; display: flex; align-items: center; white-space: nowrap; font-size: 12px; }
.ng { padding-left: 6px; background-image: var(--dh); background-position: 17px 7px; background-repeat: no-repeat; background-size: 5px 1px; }
.chv { width: 6px; height: 9px; margin: 0 3px 0 2px; flex: none; }
.chv2 { width: 9px; height: 6px; flex: none; margin-right: 2px; }
.fd { width: 16px; height: 14px; margin-right: 5px; flex: none; }
.ng .chv2 + .fd, .ng .chv + .fd { margin-left: 6px; }
.ic15 { width: 15px; height: 15px; flex: none; margin-right: 5px; }
.nl { padding-left: 43px; background-image: var(--dv), var(--dv), linear-gradient(90deg, transparent 31px, #8a8a8a 31px, #8a8a8a 43px, transparent 43px); background-size: 1px 2px, 1px 2px, 100% 1px; background-repeat: repeat-y, repeat-y, no-repeat; background-position: 12px 0, 31px 0, 0 8px; }
.nl.lst { background-image: var(--dv), linear-gradient(#8a8a8a, #8a8a8a 8px, transparent 8px), linear-gradient(90deg, transparent 31px, #8a8a8a 31px, #8a8a8a 43px, transparent 43px); background-size: 1px 2px, 1px 100%, 100% 1px; }
.cur span { background: #d8d8d8; margin-left: -3px; padding: 0 14px 0 3px; line-height: 16px; }
.vscroll { flex: none; display: flex; flex-direction: column; align-items: center; background: #f0f0f0; }
.navscroll { width: 16px; }
.arr { width: 9px; height: 6px; margin: 7px 0; flex: none; }
.arr-b { margin-top: auto; }
.navscroll .thumb { width: 15px; height: 300px; background: #c8c8c8; margin-top: 57px; }

.comp { width: 175px; flex: none; display: flex; flex-direction: column; overflow: hidden; }
.comp-tools { height: 30px; flex: none; display: flex; align-items: center; padding: 0 0 4px 4px; background: linear-gradient(#f8f8f8, #f0f0f0); white-space: nowrap; font-size: 12.500px; }
.ct-ic { width: 17px; height: 17px; flex: none; }
.ct-new { margin-left: 3px; }
.comp-tools .caret { margin-left: 4px; }
.ct-x { width: 12px; height: 12px; margin-left: 7px; flex: none; }
.ct-del { margin-left: 6px; }
.ct-cp { width: 15px; height: 15px; margin-left: 6px; flex: none; }
.ct-copy { margin-left: 5px; }
.ct-ab { width: 12px; height: 15px; margin-left: 8px; flex: none; }
.ab { font: 8px "Liberation Sans", sans-serif; fill: #444; }
.search { height: 28px; flex: none; display: flex; align-items: center; padding-left: 1px; }
.search-box { width: 157px; height: 24px; background: #fff; border: 1px solid #888; border-width: 2px 1px 1px 2px; color: #8a8a8a; font-size: 13px; line-height: 20px; padding-left: 2px; }
.search-ic { width: 11px; height: 14px; margin-left: 6px; flex: none; }
.comp-treebox { height: 563px; flex: none; border: 2px solid #8c8c8c; border-right: 0; background: #fff; display: flex; }
.comp-tree { width: 163px; flex: none; }
.comp-tree tt { line-height: 14px; }
.compscroll { width: 12px; }
.compscroll .thumb { width: 12px; height: 75px; background: #c0c0c0; margin-top: 447px; }
.cg { padding-left: 25px; background-image: var(--dh); background-position: 36px 8px; background-repeat: no-repeat; background-size: 6px 1px; }
.cg tt { margin-left: 6px; padding-top: 2px; }
.cg .chv2 { margin-right: 8px; }
.ic13 { width: 13px; height: 13px; flex: none; }
.cl { padding-left: 61px; background-image: var(--dv), var(--dv), linear-gradient(90deg, transparent 49px, #8a8a8a 49px, #8a8a8a 60px, transparent 60px); background-repeat: repeat-y, repeat-y, no-repeat; background-position: 30px 0, 49px 0, 0 8px; background-size: 1px 2px, 1px 2px, 100% 1px; }
.cl.lst { background-image: var(--dv), linear-gradient(#8a8a8a, #8a8a8a 8px, transparent 8px), linear-gradient(90deg, transparent 49px, #8a8a8a 49px, #8a8a8a 60px, transparent 60px); background-size: 1px 2px, 1px 100%, 100% 1px; }
.cl .ic13 { margin-right: 8px; }
.cl.end { padding-left: 58px; background-image: linear-gradient(#8a8a8a, #8a8a8a 8px, transparent 8px), linear-gradient(90deg, transparent 49px, #8a8a8a 49px, #8a8a8a 58px, transparent 58px); background-position: 49px 0, 0 8px; background-size: 1px 100%, 100% 1px; background-repeat: no-repeat; }
.sel { width: 99px; height: 16px; background: #316ac5; padding-left: 3px; display: flex; align-items: center; color: #fff; }

/* dialog */
.dialog { width: 998px; flex: none; height: 618px; background: linear-gradient(#94aecb, #b5cfe7 30px); border-left: 1px solid #2b3a44; border-right: 1px solid #2ba6d9; border-bottom: 2px solid #2ba6d9; padding: 0 7px 7px 6px; display: flex; flex-direction: column; }
.dlg-title { height: 29px; flex: none; font-size: 12px; line-height: 35px; padding-left: 1px; color: #111; }
.dlg-body { flex: 1; background: #f0f0f0; border: 1px solid #a8a8a8; border-top: 0; display: flex; flex-direction: column; width: 984px; min-height: 0; }
.radios { height: 34px; flex: none; display: flex; align-items: center; padding-left: 150px; border-top: 1px solid #dfe8f0; }
.radio { display: flex; align-items: center; gap: 2px; width: 400px; font-size: 12px; }
.dot { width: 13px; height: 13px; border: 1px solid #555; border-radius: 50%; background: #fff; flex: none; display: flex; justify-content: center; align-items: center; }
.dot.on::after { content: ""; width: 7px; height: 7px; border-radius: 50%; background: #444; }
.cad { display: block; flex: none; background: #000; shape-rendering: crispEdges; }
.dlg-foot { flex: 1; display: flex; justify-content: flex-end; align-items: center; padding-right: 27px; }
.btn { width: 73px; height: 23px; background: #e1e1e1; border: 1px solid #adadad; font: 12px "Noto Sans CJK SC", sans-serif; color: #222; padding: 0; }
.rstrip { width: 19px; flex: none; height: 620px; display: flex; flex-direction: column; }
.rs-head { height: 28px; flex: none; background: linear-gradient(#f0f0f0, #fbfbfb); }
.rs-white { height: 20px; flex: none; background: #fff; border-bottom: 1px solid #ccc; }
.rs-box { flex: 1; margin-top: 4px; background: #fff; border: 1px solid #aaa; border-left: 0; }

.ln { fill: none; stroke: #fff; stroke-width: 3; }
.pk { stroke: #f0f; stroke-width: 6; }
.cy { stroke: #0ff; stroke-width: 6; }
.gn { stroke: #0f0; stroke-width: 6; }
.ye { stroke: #ff0; stroke-width: 6; }
.rd { stroke: #f00; stroke-width: 6; }
.cyd { fill: #0ff; stroke: none; }
.gnd { fill: #0f0; stroke: none; }
.yed { fill: #ff0; stroke: none; }
.num { font: 38px "Liberation Serif", serif; fill: #fff; text-anchor: middle; }
.g { font: 13.500px "Liberation Mono", monospace; letter-spacing: -.6px; fill: #0f0; }
.g2 { font: 14px "Liberation Mono", monospace; letter-spacing: -.4px; fill: #0f0; }
.cn { font: 15.500px "Noto Sans CJK SC", sans-serif; fill: #fff; }
.big { font-size: 37px; letter-spacing: 1.500px; }
.big2 { font-size: 30px; letter-spacing: 2px; }
.gy { fill: #d0d0d0; }

/* status */
.status { height: 20px; flex: none; display: flex; gap: 2px; background: #fff; padding-right: 10px; }
.st { background: #f6f6f6; border: 1px solid #dedede; font-size: 12px; line-height: 18px; padding-left: 1px; white-space: nowrap; }
.s0 { width: 148px; }
.s1 { width: 78px; }
.s2 { width: 98px; }
.s3 { width: 48px; padding-left: 2px; }
.s4 { width: 914px; }
.s5 { width: 60px; }

/* taskbar */
.taskbar { height: 40px; flex: none; background: #05090d; color: #fff; display: flex; align-items: center; }
.start { width: 48px; height: 40px; background: #000; display: flex; align-items: center; justify-content: center; flex: none; }
.start svg { width: 16px; height: 16px; }
.tsearch { width: 344px; height: 40px; background: #333; display: flex; align-items: center; padding-left: 10px; color: #9a9a9a; font-size: 13.500px; flex: none; }
.cortana { width: 20px; height: 20px; margin-right: 6px; flex: none; }
.tmic { width: 12px; height: 18px; margin-left: auto; margin-right: 15px; }
.slot { height: 40px; display: flex; align-items: center; justify-content: center; flex: none; border-bottom: 2px solid transparent; padding-top: 2px; }
.open { border-bottom-color: #76b9ed; margin: 0 2px; }
.active { background: #2b3136; margin: 0 3px 0 1px; }
.gapp { margin-left: 3px; }
.w38 { width: 38px; } .w40 { width: 40px; } .w41 { width: 35px; } .w43 { width: 45px; }
.w48 { width: 48px; } .w50 { width: 50px; } .w52 { width: 54px; }
.open.w40 { width: 34px; }
.sv20 { width: 20px; height: 18px; } .sv22 { width: 22px; height: 22px; } .sv24 { width: 24px; height: 24px; }
.ie-w { font: bold 24px "Liberation Sans", sans-serif; fill: #eee; }
.ie-b { font: bold 26px "Liberation Sans", sans-serif; fill: #2b9ae8; }
.tk-g { font: bold 30px/30px "Liberation Sans", sans-serif; color: #1a8be8; }
.spiral { position: relative; }
.tkbell { width: 12px; height: 14px; position: absolute; left: 30px; top: 4px; }
.tsep { width: 2px; height: 20px; background: #3a3f44; flex: none; margin: 0 10px; }
.ts2 { margin: 0 9px 0 15px; }
.tk-link { color: #ccc; width: 35px; flex: none; }
.tk-cpu { width: 64px; margin-left: 1px; display: flex; flex-direction: column; align-items: center; line-height: 20px; color: #ddd; flex: none; }
.tray { display: flex; align-items: center; gap: 7px; margin-left: 12px; flex: none; }
.t14 { width: 14px; height: 8px; } .t14b { width: 14px; height: 16px; margin-left: 4px; } .t18 { width: 18px; height: 16px; } .t24 { width: 24px; height: 18px; }
.batt { margin-right: 3px; }
.wifi { margin-right: -4px; }
.t16 { width: 16px; height: 18px; }
.t-en { font-size: 14px; margin: 0 6px 0 2px; }
.sog { font: bold 13px "Liberation Sans", sans-serif; fill: #fff; }
.clock { width: 68px; margin-left: 13px; display: flex; flex-direction: column; align-items: center; line-height: 19px; font-size: 13px; color: #e8e8e8; flex: none; }
.notif { width: 40px; display: flex; justify-content: center; margin-left: 2px; flex: none; }
.notif svg { width: 16px; height: 18px; }
```
